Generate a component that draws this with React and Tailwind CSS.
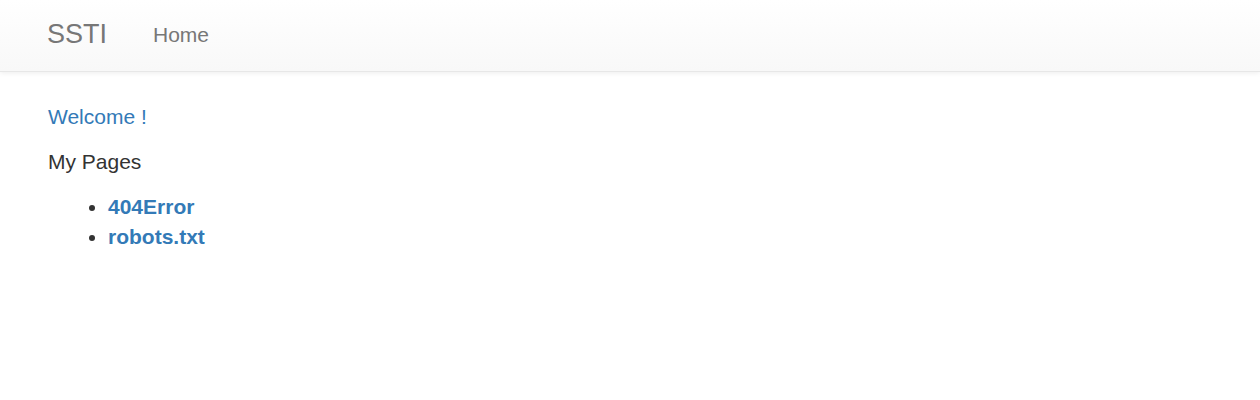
export default function App() {
  return (
    <div className="min-h-[400px] bg-white" style={{ fontFamily: '"Liberation Sans", Arial, sans-serif' }}>
      <nav className="h-[72px] border-b border-[#e7e7e7] bg-gradient-to-b from-white to-[#f8f8f8] shadow-[inset_0_1px_0_rgba(255,255,255,0.15),0_1px_5px_rgba(0,0,0,0.075)] flex items-center pl-[47px] pb-[3px]">
        <a className="text-[27px] leading-none text-[#777] mr-[46px]">SSTI</a>
        <a className="text-[21px] leading-none text-[#777] mt-[1px]">Home</a>
      </nav>
      <div className="pl-[48px] pt-[31px] text-[21px] text-[#333]">
        <div className="leading-[28px] text-[#337ab7]">Welcome !</div>
        <div className="leading-[28px] mt-[17px]">My Pages</div>
        <ul className="list-disc pl-[60px] mt-[16px] leading-[30px]">
          <li><a className="font-bold text-[#337ab7]">404Error</a></li>
          <li><a className="font-bold text-[#337ab7]">robots.txt</a></li>
        </ul>
      </div>
    </div>
  );
}
